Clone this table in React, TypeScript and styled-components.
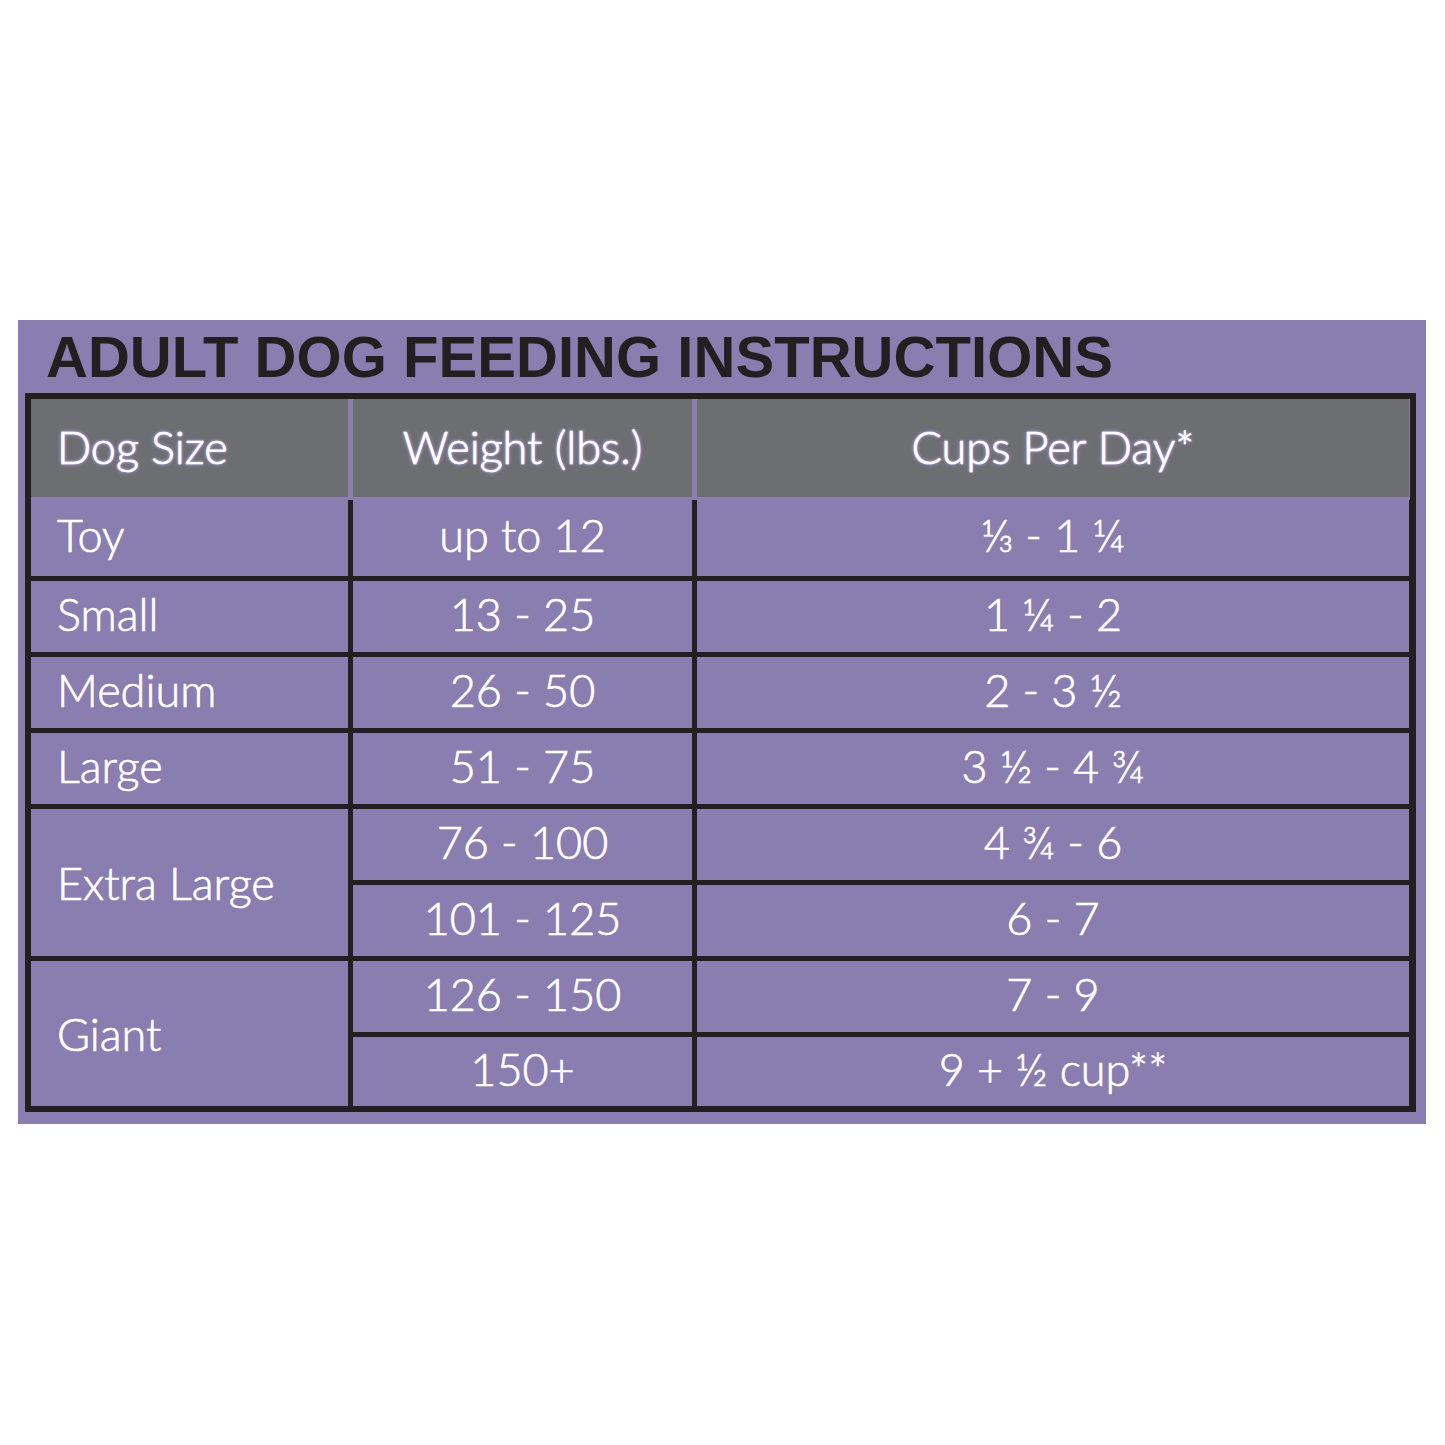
import styled, { createGlobalStyle } from 'styled-components'

const Global = createGlobalStyle`
  html, body {
    margin: 0;
    padding: 0;
    background: #fff;
  }
`

const Page = styled.div`
  width: 1445px;
  height: 1445px;
  padding-top: 320px;
  padding-left: 18px;
  box-sizing: border-box;
`

const Panel = styled.section`
  width: 1408px;
  height: 804px;
  box-sizing: border-box;
  background: #8a7daf;
  padding: 0 10px 11px 7px;
`

const Title = styled.h1`
  margin: 0 0 7px;
  padding: 8px 0 0 21px;
  font-family: 'Liberation Sans', Arial, sans-serif;
  font-weight: 700;
  font-size: 58px;
  line-height: 58px;
  color: #231f20;
  letter-spacing: 0.05px;
  white-space: nowrap;
`

const Table = styled.div`
  border: 6px solid #231f20;
  background: #231f20;
  font-family: Lato, 'Noto Sans', sans-serif;
  font-weight: 300;
  color: #fff;
  -webkit-text-stroke: 0.7px #fff;
`

const cols = '317px 339px 712px'

const HeaderRow = styled.div`
  display: grid;
  grid-template-columns: ${cols};
  column-gap: 5px;
  background: #8a7daf;
  padding-bottom: 3px;
`

const HeadCell = styled.div<{ $left?: boolean }>`
  height: 98px;
  background: #6d6e71;
  display: flex;
  align-items: center;
  justify-content: ${(p) => (p.$left ? 'flex-start' : 'center')};
  padding-left: ${(p) => (p.$left ? '26px' : '0')};
  padding-bottom: 2px;
  box-sizing: border-box;
  font-size: 45px;
  text-shadow: 0 0 2px #cbbcf2, 0 0 3px #a996dc, 0 0 4px #a996dc;
`

const Body = styled.div`
  display: grid;
  grid-template-columns: ${cols};
  grid-template-rows: 76px repeat(6, 71px) 69px;
  gap: 5px;
`

const Cell = styled.div<{ $left?: boolean; $span?: number }>`
  background: #8a7daf;
  display: flex;
  align-items: center;
  justify-content: ${(p) => (p.$left ? 'flex-start' : 'center')};
  padding-left: ${(p) => (p.$left ? '26px' : '0')};
  padding-bottom: ${(p) => (p.$span && p.$span > 1 ? '0' : '6px')};
  font-size: 45px;
  grid-row: ${(p) => (p.$span ? `span ${p.$span}` : 'auto')};
`

const rows: { size: string; weights: [string, string][] }[] = [
  { size: 'Toy', weights: [['up to 12', '⅓ - 1 ¼']] },
  { size: 'Small', weights: [['13 - 25', '1 ¼ - 2']] },
  { size: 'Medium', weights: [['26 - 50', '2 - 3 ½']] },
  { size: 'Large', weights: [['51 - 75', '3 ½ - 4 ¾']] },
  {
    size: 'Extra Large',
    weights: [
      ['76 - 100', '4 ¾ - 6'],
      ['101 - 125', '6 - 7'],
    ],
  },
  {
    size: 'Giant',
    weights: [
      ['126 - 150', '7 - 9'],
      ['150+', '9 + ½ cup**'],
    ],
  },
]

export default function App() {
  return (
    <>
      <Global />
      <Page>
        <Panel>
          <Title>ADULT DOG FEEDING INSTRUCTIONS</Title>
          <Table>
            <HeaderRow>
              <HeadCell $left>Dog Size</HeadCell>
              <HeadCell>Weight (lbs.)</HeadCell>
              <HeadCell>Cups Per Day*</HeadCell>
            </HeaderRow>
            <Body>
              {rows.map((r) =>
                r.weights.map(([w, c], i) => [
                  i === 0 ? (
                    <Cell key={r.size + 's'} $left $span={r.weights.length}>
                      {r.size}
                    </Cell>
                  ) : null,
                  <Cell key={r.size + w}>{w}</Cell>,
                  <Cell key={r.size + c}>{c}</Cell>,
                ])
              )}
            </Body>
          </Table>
        </Panel>
      </Page>
    </>
  )
}
